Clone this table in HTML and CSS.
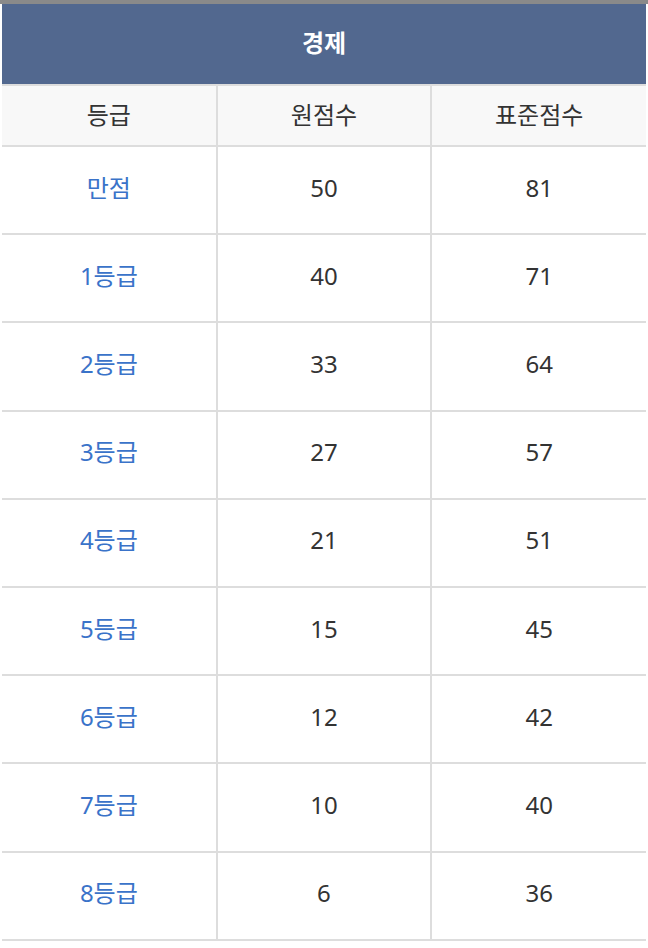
FILE: index.html
```html
<!DOCTYPE html>
<html lang="ko">
<head>
<meta charset="utf-8">
<link rel="stylesheet" href="styles.css">
</head>
<body>
<div class="topbar"></div>
<div class="wrap">
<table class="score">
<colgroup><col class="c"><col class="c"><col class="c"></colgroup>
<thead>
<tr class="title"><th colspan="3">경제</th></tr>
<tr class="head"><th>등급</th><th>원점수</th><th>표준점수</th></tr>
</thead>
<tbody>
<tr><td class="grade">만점</td><td>50</td><td>81</td></tr>
<tr><td class="grade">1등급</td><td>40</td><td>71</td></tr>
<tr><td class="grade">2등급</td><td>33</td><td>64</td></tr>
<tr><td class="grade">3등급</td><td>27</td><td>57</td></tr>
<tr><td class="grade">4등급</td><td>21</td><td>51</td></tr>
<tr><td class="grade">5등급</td><td>15</td><td>45</td></tr>
<tr><td class="grade">6등급</td><td>12</td><td>42</td></tr>
<tr><td class="grade">7등급</td><td>10</td><td>40</td></tr>
<tr><td class="grade">8등급</td><td>6</td><td>36</td></tr>
</tbody>
</table>
</div>
</body>
</html>
```
FILE: styles.css
```css
html, body {
  margin: 0;
  padding: 0;
  background: #ffffff;
}
body {
  font-family: "Noto Sans", "Noto Sans CJK KR", sans-serif;
  color: #333333;
}
.topbar {
  height: 4px;
  background: #8a8a8a;
}
.wrap {
  padding: 0 2px;
}
.score {
  width: 644px;
  border-collapse: collapse;
  table-layout: fixed;
}
.score .c {
  width: 33.333%;
}
.score th,
.score td {
  text-align: center;
  padding: 0;
  font-size: 24px;
  font-weight: 400;
  line-height: 1.2;
  box-sizing: border-box;
}
.title th {
  background: #52688f;
  color: #ffffff;
  font-weight: 700;
  height: 81px;
  padding-bottom: 2px;
  border-bottom: 2px solid #dddddd;
}
.head th {
  background: #f8f8f8;
  height: 61px;
  border: 2px solid #dddddd;
  border-top: 0;
  color: #333333;
}
.score td {
  border: 2px solid #dddddd;
  height: 88.2px;
  padding-bottom: 4px;
}
.score tr > :first-child {
  border-left: 0;
}
.score tr > :last-child {
  border-right: 0;
}
.grade {
  color: #3a73c9;
}
```
